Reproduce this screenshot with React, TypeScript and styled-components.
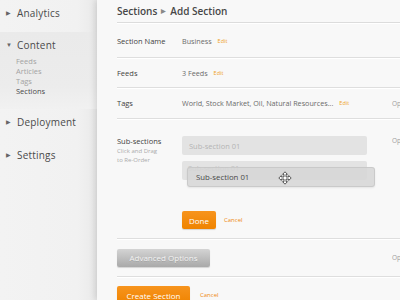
import React from "react";
import styled, { createGlobalStyle } from "styled-components";

const Global = createGlobalStyle`
  html, body { margin: 0; padding: 0; width: 400px; height: 300px; overflow: hidden; background: #f4f4f4; }
  * { box-sizing: border-box; }
  body { font-family: "Open Sans", "Noto Sans", "Liberation Sans", sans-serif; }
`;

const Page = styled.div`
  display: flex;
  width: 400px;
  height: 300px;
  overflow: hidden;
`;

const Sidebar = styled.nav`
  width: 97px;
  flex: none;
  background: linear-gradient(to right, #f3f3f3 0%, #f1f1f1 80%, #e9e9e9 100%);
  display: flex;
  flex-direction: column;
`;

const NavGroup = styled.div<{ $open?: boolean; $h: number }>`
  height: ${(p) => p.$h}px;
  flex: none;
  padding: 5px 0 0 6px;
  background: ${(p) =>
    p.$open ? "linear-gradient(to bottom, #eaeaea 0%, #ececec 70%, #f1f1f1 100%)" : "transparent"};
`;

const NavTitle = styled.div`
  display: flex;
  align-items: center;
  gap: 5px;
  font-size: 10px;
  color: #4a4a4a;
  letter-spacing: 0.2px;
  height: 16px;
`;

const Tri = styled.span`
  font-size: 6px;
  color: #666;
  width: 6px;
  display: inline-block;
`;

const SubList = styled.div`
  display: flex;
  flex-direction: column;
  padding: 3px 0 0 10px;
`;

const SubItem = styled.div<{ $active?: boolean }>`
  font-size: 7.5px;
  line-height: 10px;
  color: ${(p) => (p.$active ? "#4a4a4a" : "#a3a3a3")};
`;

const Main = styled.main`
  flex: 1;
  background: #f8f8f8;
  box-shadow: -2px 0 6px rgba(0, 0, 0, 0.12);
  position: relative;
  overflow: hidden;
  padding-left: 20px;
  display: flex;
  flex-direction: column;
`;

const Header = styled.h1`
  margin: 0;
  flex: none;
  height: 23px;
  display: flex;
  align-items: center;
  gap: 4px;
  font-size: 10px;
  font-weight: 600;
  color: #474747;
  border-bottom: 1px solid #dcdcdc;
  box-shadow: 0 1px 0 #fff;
  padding-bottom: 1px;
  white-space: nowrap;
`;

const Crumb = styled.span`
  font-size: 6px;
  color: #888;
`;

const Row = styled.div<{ $h: number; $top?: boolean; $pt?: number; $last?: boolean }>`
  height: ${(p) => p.$h}px;
  flex: none;
  display: grid;
  grid-template-columns: 65px 208px 60px;
  align-items: ${(p) => (p.$top ? "start" : "center")};
  padding-top: ${(p) => p.$pt ?? 0}px;
  border-bottom: ${(p) => (p.$last ? "none" : "1px solid #dedede")};
  box-shadow: ${(p) => (p.$last ? "none" : "0 1px 0 #fff")};
  white-space: nowrap;
`;

const Label = styled.div`
  font-size: 7.5px;
  color: #3f3f3f;
`;

const Hint = styled.div`
  font-size: 6px;
  color: #ababab;
  line-height: 8.5px;
  margin-top: 1px;
`;

const Value = styled.div`
  font-size: 7.2px;
  color: #6a6a6a;
  display: flex;
  align-items: center;
  gap: 6px;
`;

const Edit = styled.span`
  font-size: 5.5px;
  color: #efa21f;
`;

const Note = styled.div`
  font-size: 6.5px;
  color: #a0a0a0;
  padding-left: 2px;
`;

const SubCol = styled.div`
  display: flex;
  flex-direction: column;
  gap: 6px;
  position: relative;
`;

const Slot = styled.div<{ $ghost?: boolean }>`
  width: 185px;
  height: 19px;
  border-radius: 2px;
  background: #e3e3e3;
  font-size: 7.5px;
  color: ${(p) => (p.$ghost ? "#c2c2c2" : "#b4b4b4")};
  display: flex;
  align-items: ${(p) => (p.$ghost ? "flex-start" : "center")};
  padding: ${(p) => (p.$ghost ? "2px 0 0 6px" : "0 0 0 7px")};
`;

const Dragged = styled.div`
  position: absolute;
  left: 5px;
  top: 31px;
  width: 188px;
  height: 20px;
  border-radius: 3px;
  background: rgba(214, 214, 214, 0.85);
  border: 1px solid rgba(190, 190, 190, 0.6);
  box-shadow: 0 1px 2px rgba(0, 0, 0, 0.08);
  font-size: 7.8px;
  color: #4a4a4a;
  display: flex;
  align-items: center;
  padding-left: 8px;
`;

const Cursor = styled.svg`
  position: absolute;
  left: 90px;
  top: 3px;
`;

const Actions = styled.div`
  display: flex;
  align-items: center;
  gap: 8px;
  margin-top: 31px;
`;

const OrangeBtn = styled.button<{ $w: number }>`
  width: ${(p) => p.$w}px;
  height: 18px;
  border: none;
  border-radius: 2px;
  background: linear-gradient(#f7941d, #ef8300);
  color: #fff;
  font-family: inherit;
  font-size: 8px;
  padding: 0;
  box-shadow: 0 1px 1px rgba(0, 0, 0, 0.15);
`;

const Cancel = styled.span`
  font-size: 6px;
  color: #ef8a10;
`;

const GrayBtn = styled.button`
  width: 93px;
  height: 18px;
  border: none;
  border-radius: 2px;
  background: linear-gradient(#d4d4d4, #a9a9a9);
  color: #f2f2f2;
  text-shadow: 0 1px 0 rgba(0, 0, 0, 0.12);
  font-family: inherit;
  font-size: 8px;
  padding: 0;
  box-shadow: 0 1px 1px rgba(0, 0, 0, 0.15);
`;

const BtnRow = styled.div`
  display: flex;
  align-items: center;
  gap: 10px;
  grid-column: 1 / 3;
`;

const MoveCursor = () => (
  <Cursor width="14" height="14" viewBox="0 0 14 14">
    <path
      d="M7 0.8 L9.4 3.3 H8 V6 H10.7 V4.6 L13.2 7 L10.7 9.4 V8 H8 V10.7 H9.4 L7 13.2 L4.6 10.7 H6 V8 H3.3 V9.4 L0.8 7 L3.3 4.6 V6 H6 V3.3 H4.6 Z"
      fill="#fff"
      stroke="#333"
      strokeWidth="0.8"
      strokeLinejoin="round"
    />
  </Cursor>
);

export default function App() {
  return (
    <>
      <Global />
      <Page>
        <Sidebar>
          <NavGroup $h={32}>
            <NavTitle><Tri>▶</Tri>Analytics</NavTitle>
          </NavGroup>
          <NavGroup $open $h={77}>
            <NavTitle><Tri>▼</Tri>Content</NavTitle>
            <SubList>
              <SubItem>Feeds</SubItem>
              <SubItem>Articles</SubItem>
              <SubItem>Tags</SubItem>
              <SubItem $active>Sections</SubItem>
            </SubList>
          </NavGroup>
          <NavGroup $h={33}>
            <NavTitle><Tri>▶</Tri>Deployment</NavTitle>
          </NavGroup>
          <NavGroup $h={33}>
            <NavTitle><Tri>▶</Tri>Settings</NavTitle>
          </NavGroup>
        </Sidebar>
        <Main>
          <Header>
            Sections <Crumb>▶</Crumb> Add Section
          </Header>
          <Row $h={35} $pt={1}>
            <Label>Section Name</Label>
            <Value>Business<Edit>Edit</Edit></Value>
          </Row>
          <Row $h={30}>
            <Label>Feeds</Label>
            <Value>3 Feeds<Edit>Edit</Edit></Value>
          </Row>
          <Row $h={31}>
            <Label>Tags</Label>
            <Value>World, Stock Market, Oil, Natural Resources...<Edit>Edit</Edit></Value>
            <Note>Optional</Note>
          </Row>
          <Row $h={120} $top $pt={17}>
            <div>
              <Label>Sub-sections</Label>
              <Hint>Click and Drag<br />to Re-Order</Hint>
            </div>
            <div>
              <SubCol>
                <Slot>Sub-section 01</Slot>
                <Slot $ghost>Sub-section 01</Slot>
                <Dragged>
                  Sub-section 01
                  <MoveCursor />
                </Dragged>
              </SubCol>
              <Actions>
                <OrangeBtn $w={34}>Done</OrangeBtn>
                <Cancel>Cancel</Cancel>
              </Actions>
            </div>
            <Note>Optional</Note>
          </Row>
          <Row $h={38}>
            <BtnRow>
              <GrayBtn>Advanced Options</GrayBtn>
            </BtnRow>
            <Note>Optional</Note>
          </Row>
          <Row $h={40} $top $pt={9} $last>
            <BtnRow>
              <OrangeBtn $w={73}>Create Section</OrangeBtn>
              <Cancel>Cancel</Cancel>
            </BtnRow>
          </Row>
        </Main>
      </Page>
    </>
  );
}
